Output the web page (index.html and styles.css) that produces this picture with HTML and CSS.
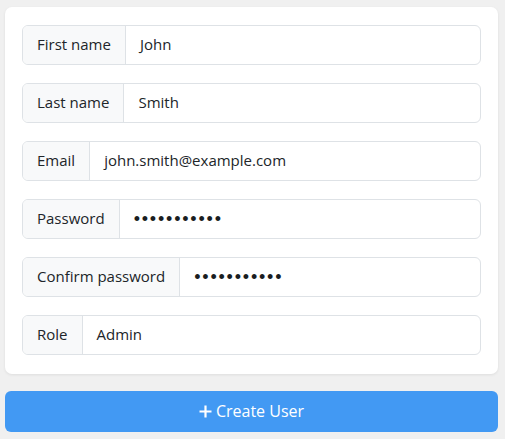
FILE: index.html
```html
<!DOCTYPE html>
<html>
<head>
<meta charset="utf-8">
<link rel="stylesheet" href="styles.css">
</head>
<body>
<div class="page">
  <div class="card">
    <div class="group"><span class="label">First name</span><span class="value">John</span></div>
    <div class="group"><span class="label">Last name</span><span class="value">Smith</span></div>
    <div class="group"><span class="label">Email</span><span class="value">john.smith@example.com</span></div>
    <div class="group"><span class="label">Password</span><span class="value dots">•••••••••••</span></div>
    <div class="group"><span class="label">Confirm password</span><span class="value dots">•••••••••••</span></div>
    <div class="group"><span class="label">Role</span><span class="value">Admin</span></div>
  </div>
  <button class="btn"><svg class="plus" width="13" height="13" viewBox="0 0 13 13"><path d="M6.5 0.5v12M0.5 6.5h12" stroke="#fff" stroke-width="2.2" fill="none"/></svg>Create User</button>
</div>
</body>
</html>
```
FILE: styles.css
```css
* { box-sizing: border-box; }
html, body { margin: 0; background: #f0f0f0; }
body { font-family: "Open Sans", "Noto Sans", sans-serif; font-size: 15px; color: #212529; }
.page { padding: 7px 7px 0 5px; display: flex; flex-direction: column; gap: 17px; }
.card {
  background: #fff;
  border-radius: 7px;
  box-shadow: 0 1px 3px rgba(0,0,0,0.08);
  padding: 18px 17px 19px 17px;
  display: flex; flex-direction: column; gap: 18px;
}
.group {
  display: flex; height: 40px;
  border: 1px solid #dee2e6; border-radius: 6px; overflow: hidden;
}
.label {
  background: #f8f9fa; border-right: 1px solid #dee2e6;
  padding: 0 14px 2px; display: flex; align-items: center; white-space: nowrap;
}
.value { padding: 0 14px 2px; display: flex; align-items: center; white-space: nowrap; }
.dots { font-family: "Liberation Sans", sans-serif; font-size: 18px; letter-spacing: 1.8px; color: #1a1d21; padding-bottom: 0; }
.btn {
  height: 41px; border: none; border-radius: 6px; background: #4299f3; color: #fff;
  font: inherit; font-size: 16px; display: flex; align-items: center; justify-content: center; gap: 4px;
  padding-bottom: 2px;
}
.plus { display: block; }
```
